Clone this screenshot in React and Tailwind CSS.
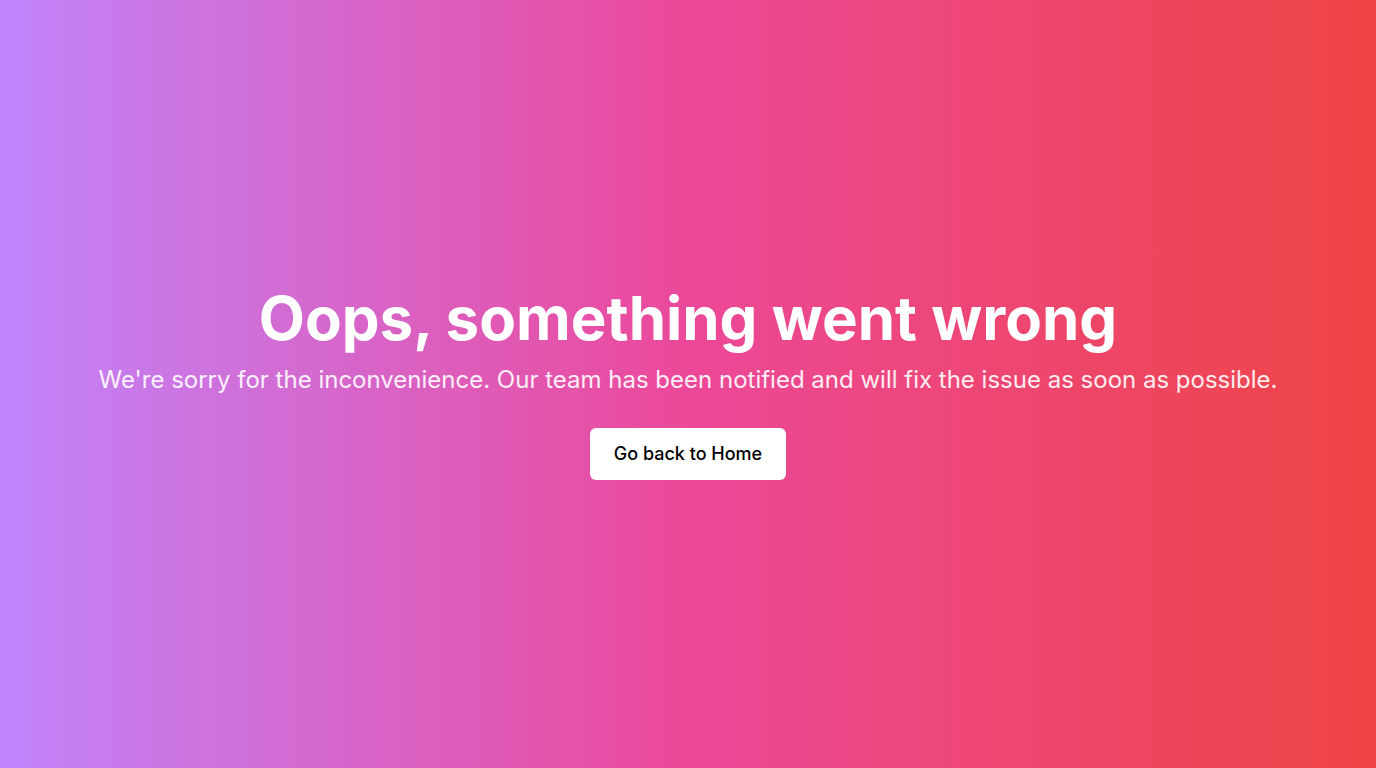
export default function App() {
  return (
    <div
      className="flex h-screen w-full flex-col items-center justify-center bg-linear-to-r/srgb from-[#c084fc] via-[#ec4899] to-[#ef4444] text-center text-white"
      style={{ fontFamily: "Inter, 'Liberation Sans', sans-serif" }}
    >
      <h1 className="text-6xl font-bold">Oops, something went wrong</h1>
      <p className="mt-4 text-2xl text-white/90">
        We're sorry for the inconvenience. Our team has been notified and will fix the issue as soon as possible.
      </p>
      <button className="mt-8 rounded-md bg-white px-6 py-3 text-lg font-medium text-black">
        Go back to Home
      </button>
    </div>
  );
}
